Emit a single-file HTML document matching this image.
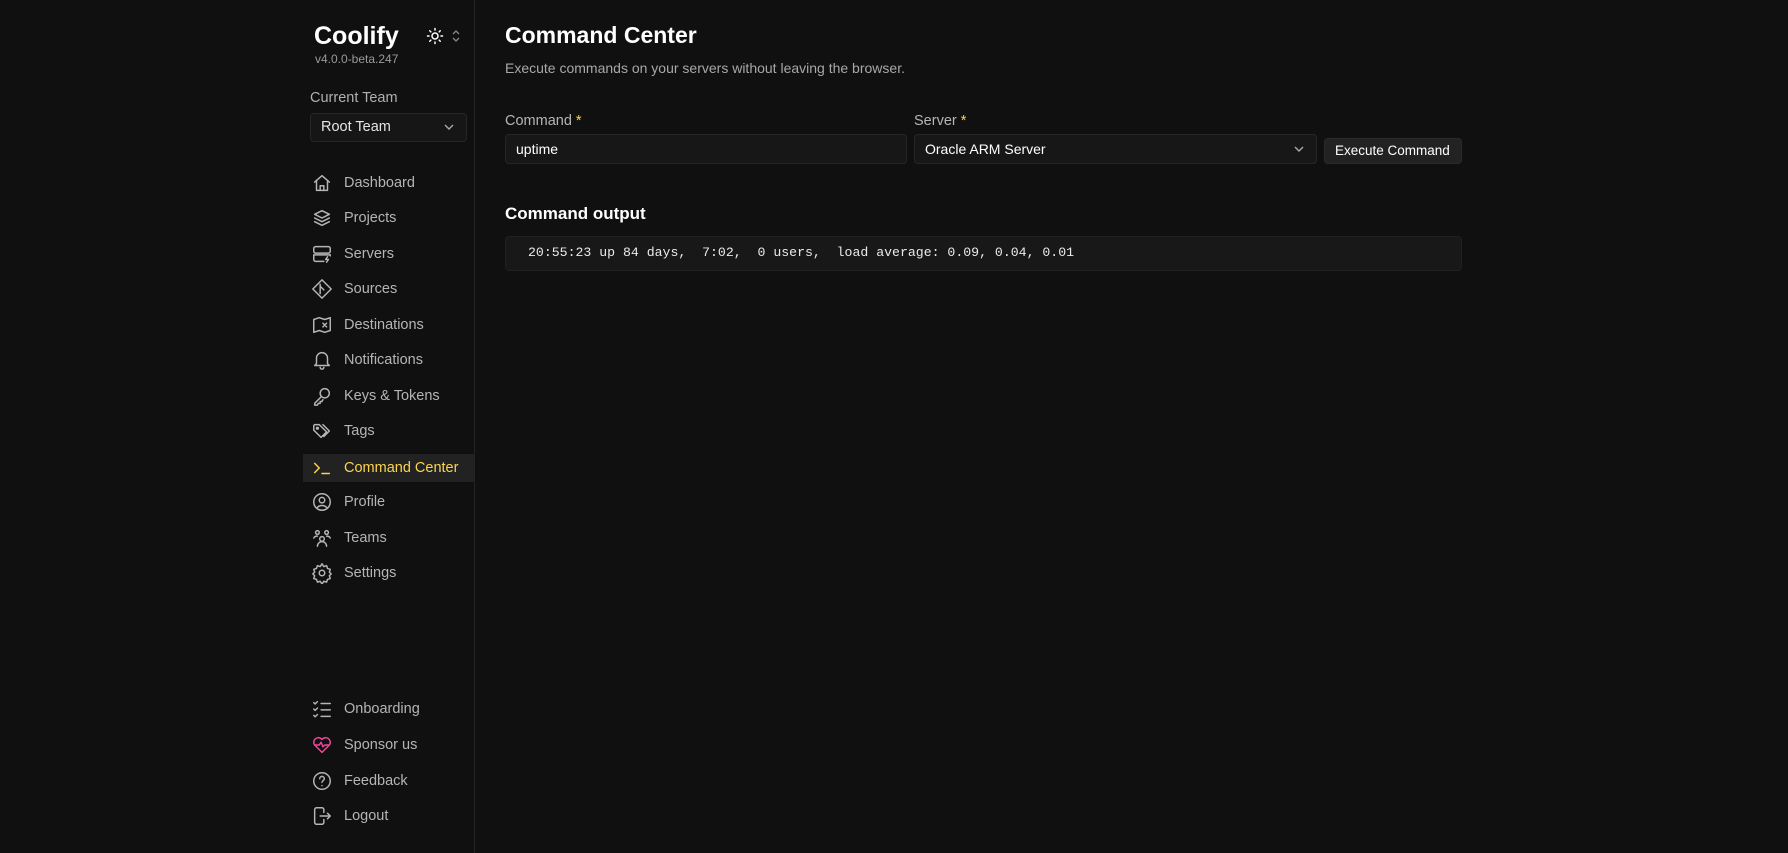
<!DOCTYPE html><html><head><style>
body{margin:0;width:1788px;height:853px;background:#101010;font-family:"Liberation Sans",sans-serif;color:#e5e5e5;position:relative;overflow:hidden}
.a{position:absolute}
.side{left:0;top:0;width:474px;height:853px;border-right:1px solid #242424}
.nav{position:absolute;left:303px;width:171px;height:28px;display:flex;align-items:center;font-size:14.5px;color:#b5b5b5}
.nav svg{position:absolute;left:8px;width:22px;height:22px;fill:none;stroke:#b5b5b5;stroke-width:1.6;stroke-linecap:round;stroke-linejoin:round}
.nav span{position:absolute;left:41px}
.box{background:#181818;border:1px solid #262626;border-radius:4px;box-sizing:border-box}
</style></head><body>
<div class="a side"></div>
<div class="a" style="left:314px;top:22px;font-size:25px;font-weight:bold;color:#fff">Coolify</div>
<div class="a" style="left:315px;top:52px;font-size:12px;color:#9a9a9a">v4.0.0-beta.247</div>
<svg class="a" style="left:426px;top:27px" width="18" height="18" viewBox="0 0 24 24" fill="none" stroke="#fff" stroke-width="2" stroke-linecap="round"><circle cx="12" cy="12" r="4"/><path d="M12 2v2M12 20v2M2 12h2M20 12h2M5 5l1.5 1.5M17.5 17.5L19 19M5 19l1.5-1.5M17.5 6.5L19 5"/></svg>
<svg class="a" style="left:451px;top:29px" width="10" height="14" viewBox="0 0 10 14" fill="none" stroke="#888" stroke-width="1.3"><path d="M2 5l3-3 3 3M2 9l3 3 3-3"/></svg>
<div class="a" style="left:310px;top:90px;font-size:14.5px;color:#b0b0b0">Current Team</div>
<div class="a box" style="left:310px;top:113px;width:157px;height:29px;background:#161616"></div>
<div class="a" style="left:321px;top:119px;font-size:14.5px;color:#e5e5e5">Root Team</div>
<svg class="a" style="left:443px;top:122px" width="12" height="10" viewBox="0 0 12 10" fill="none" stroke="#aaa" stroke-width="1.4"><path d="M2 3l4 4 4-4"/></svg>

<div class="a" style="left:303px;top:454px;width:171px;height:28px;background:#222"></div>

<div class="nav" style="top:169px"><svg viewBox="0 0 24 24"><path d="M4 11l8-7 8 7M6 9v11h12V9M10 20v-5h4v5"/></svg><span>Dashboard</span></div>
<div class="nav" style="top:204px"><svg viewBox="0 0 24 24"><path d="M12 4l8 4-8 4-8-4zM4 12l8 4 8-4M4 16l8 4 8-4"/></svg><span>Projects</span></div>
<div class="nav" style="top:240px"><svg viewBox="0 0 24 24"><rect x="3" y="4" width="18" height="7" rx="2"/><path d="M21 14v-1H3v5a2 2 0 002 2h9M18 15l-2 3h3l-2 3"/></svg><span>Servers</span></div>
<div class="nav" style="top:275px"><svg viewBox="0 0 24 24"><path d="M12 2l10 10-10 10L2 12zM10 7v10M10 9l4 4"/></svg><span>Sources</span></div>
<div class="nav" style="top:311px"><svg viewBox="0 0 24 24"><path d="M3 6l6-2 6 2 6-2v14l-6 2-6-2-6 2zM13 10l4 4M17 10l-4 4"/></svg><span>Destinations</span></div>
<div class="nav" style="top:346px"><svg viewBox="0 0 24 24"><path d="M6 16V10a6 6 0 0112 0v6l2 2H4zM10 20a2 2 0 004 0"/></svg><span>Notifications</span></div>
<div class="nav" style="top:382px"><svg viewBox="0 0 24 24"><circle cx="15" cy="9" r="5"/><path d="M11 13l-7 7v2h3l1-2h2v-2h2l1-2"/></svg><span>Keys &amp; Tokens</span></div>
<div class="nav" style="top:417px"><svg viewBox="0 0 24 24"><path d="M3 6v5l8 8 6-6-8-8H4zM13 5l7 7-6 6"/><circle cx="7" cy="9" r="1"/></svg><span>Tags</span></div>
<div class="nav" style="top:454px;color:#fcd34d"><svg viewBox="0 0 24 24" style="stroke:#fcd34d"><path d="M4 7l5 5-5 5M12 18h8"/></svg><span>Command Center</span></div>
<div class="nav" style="top:488px"><svg viewBox="0 0 24 24"><circle cx="12" cy="12" r="9"/><circle cx="12" cy="10" r="3"/><path d="M6.5 18.5a7 7 0 0111 0"/></svg><span>Profile</span></div>
<div class="nav" style="top:524px"><svg viewBox="0 0 24 24"><circle cx="7" cy="6" r="2"/><circle cx="17" cy="6" r="2"/><circle cx="12" cy="13" r="2.5"/><path d="M3 12a4 4 0 014-2M21 12a4 4 0 00-4-2M7 21a5 5 0 0110 0"/></svg><span>Teams</span></div>
<div class="nav" style="top:559px"><svg viewBox="0 0 24 24"><circle cx="12" cy="12" r="3"/><path d="M12 2l2 3 3-1 1 3 3 1-1 3 2 2-2 2 1 3-3 1-1 3-3-1-2 3-2-3-3 1-1-3-3-1 1-3-2-2 2-2-1-3 3-1 1-3 3 1z"/></svg><span>Settings</span></div>

<div class="nav" style="top:695px"><svg viewBox="0 0 24 24"><path d="M3 5l1.5 1.5L7 4M3 12l1.5 1.5L7 11M3 19l1.5 1.5L7 18M11 6h10M11 13h10M11 20h10"/></svg><span>Onboarding</span></div>
<div class="nav" style="top:731px"><svg viewBox="0 0 24 24" style="stroke:#ec4899"><path d="M12 20l-8-8a5 5 0 017-7l1 1 1-1a5 5 0 017 7zM5 12h4l2-3 2 5 2-2h4"/></svg><span>Sponsor us</span></div>
<div class="nav" style="top:767px"><svg viewBox="0 0 24 24"><circle cx="12" cy="12" r="9"/><path d="M9.5 9.5a2.5 2.5 0 115 0c0 2-2.5 2-2.5 4M12 17h.01"/></svg><span>Feedback</span></div>
<div class="nav" style="top:802px"><svg viewBox="0 0 24 24"><path d="M14 8V5a2 2 0 00-2-2H6a2 2 0 00-2 2v14a2 2 0 002 2h6a2 2 0 002-2v-3M10 12h11M18 9l3 3-3 3"/></svg><span>Logout</span></div>

<div class="a" style="left:505px;top:22px;font-size:23px;font-weight:bold;color:#fff">Command Center</div>
<div class="a" style="left:505px;top:60px;font-size:14px;color:#a8a8a8">Execute commands on your servers without leaving the browser.</div>
<div class="a" style="left:505px;top:113px;font-size:14.5px;color:#b5b5b5">Command <span style="color:#fcd34d">*</span></div>
<div class="a" style="left:914px;top:113px;font-size:14.5px;color:#b5b5b5">Server <span style="color:#fcd34d">*</span></div>
<div class="a box" style="left:505px;top:134px;width:402px;height:30px;background:#171717"></div>
<div class="a" style="left:516px;top:141px;font-size:14px;color:#fff">uptime</div>
<div class="a box" style="left:914px;top:134px;width:403px;height:30px;background:#171717"></div>
<div class="a" style="left:925px;top:141px;font-size:14px;color:#fff">Oracle ARM Server</div>
<svg class="a" style="left:1293px;top:144px" width="12" height="10" viewBox="0 0 12 10" fill="none" stroke="#aaa" stroke-width="1.4"><path d="M2 3l4 4 4-4"/></svg>
<div class="a box" style="left:1324px;top:138px;width:138px;height:26px;background:#222;border-color:#2a2a2a"></div>
<div class="a" style="left:1335px;top:143px;font-size:13.5px;color:#fff">Execute Command</div>
<div class="a" style="left:505px;top:204px;font-size:17px;font-weight:bold;color:#fff">Command output</div>
<div class="a box" style="left:505px;top:236px;width:957px;height:35px;background:#181818;border-color:#202020"></div>
<div class="a" style="left:528px;top:245px;font-family:'Liberation Mono',monospace;font-size:13.2px;color:#eaeaea;white-space:pre">20:55:23 up 84 days,  7:02,  0 users,  load average: 0.09, 0.04, 0.01</div>
</body></html>
